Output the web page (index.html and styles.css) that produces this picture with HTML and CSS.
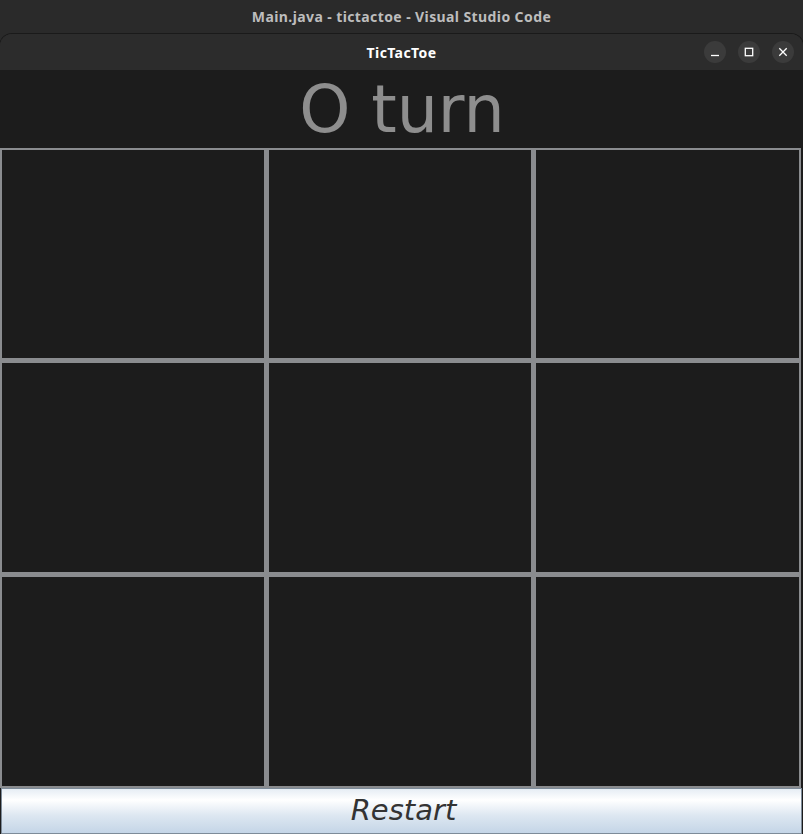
FILE: index.html
```html
<!DOCTYPE html>
<html>
<head>
<meta charset="utf-8">
<link rel="stylesheet" href="styles.css">
</head>
<body>
<div class="desk">
  <div class="vsbar">Main.java - tictactoe - Visual Studio Code</div>
  <div class="win">
    <div class="header">
      <div class="title">TicTacToe</div>
      <div class="ctrls">
        <span class="cbtn"><svg width="12" height="12" viewBox="0 0 12 12"><path d="M2 9.5h8" stroke="#fff" stroke-width="1.3"/></svg></span>
        <span class="cbtn"><svg width="12" height="12" viewBox="0 0 12 12"><rect x="2.3" y="2.3" width="7.4" height="7.4" fill="none" stroke="#fff" stroke-width="1.3"/></svg></span>
        <span class="cbtn"><svg width="12" height="12" viewBox="0 0 12 12"><path d="M2.3 2.3l7.4 7.4M9.7 2.3l-7.4 7.4" stroke="#fff" stroke-width="1.3"/></svg></span>
      </div>
    </div>
    <div class="body">
      <div class="status">O turn</div>
      <div class="grid">
        <div class="cell"></div><div class="cell"></div><div class="cell"></div>
        <div class="cell"></div><div class="cell"></div><div class="cell"></div>
        <div class="cell"></div><div class="cell"></div><div class="cell"></div>
      </div>
      <button class="restart">Restart</button>
    </div>
  </div>
</div>
</body>
</html>
```
FILE: styles.css
```css
html, body {
  margin: 0;
  padding: 0;
  background: #2a2a2a;
  overflow: hidden;
}
.desk {
  width: 803px;
  height: 834px;
  display: flex;
  flex-direction: column;
  background: #2a2a2a;
}
.vsbar {
  height: 34px;
  line-height: 34px;
  text-align: center;
  color: #bdbdbd;
  font-family: "Noto Sans", "DejaVu Sans", sans-serif;
  font-weight: bold;
  font-size: 14px;
  letter-spacing: 0.4px;
  flex: none;
}
.win {
  flex: 1;
  display: flex;
  flex-direction: column;
  border-radius: 12px 12px 0 0;
  background: #2c2c2c;
  box-shadow: 0 0 0 1px #1a1a1a;
  overflow: hidden;
}
.header {
  height: 36px;
  flex: none;
  display: flex;
  align-items: center;
  justify-content: center;
  background: #2c2c2c;
}
.title {
  color: #ffffff;
  font-family: "Noto Sans", "DejaVu Sans", sans-serif;
  font-weight: bold;
  font-size: 14px;
  letter-spacing: 0.4px;
}
.ctrls {
  position: absolute;
  right: 9px;
  top: 41px;
  display: flex;
  gap: 12px;
}
.cbtn {
  width: 22px;
  height: 22px;
  border-radius: 50%;
  background: #3b3b3b;
  display: flex;
  align-items: center;
  justify-content: center;
}
.body {
  flex: 1;
  display: flex;
  flex-direction: column;
  background: #1c1c1c;
}
.status {
  height: 78px;
  flex: none;
  text-align: center;
  color: #8e8e8e;
  font-family: "DejaVu Sans", sans-serif;
  font-size: 65px;
  line-height: 80px;
  padding-left: 1px;
  box-sizing: border-box;
}
.grid {
  height: 640px;
  width: 801px;
  flex: none;
  display: grid;
  gap: 1px;
  background: #8a8c8f;
  grid-template-columns: 266px 266px 267px;
  grid-template-rows: 212px 213px 213px;
}
.cell {
  border: 2px solid #8a8c8f;
  background: #1c1c1c;
}
.restart {
  flex: 1;
  width: 801px;
  margin: 0 0 0 1px;
  border: 1px solid #7d8b99;
  background: linear-gradient(#e6edf4 0%, #ffffff 25%, #dde7f1 60%, #c4d5e7 100%);
  font-family: "DejaVu Sans", sans-serif;
  font-style: italic;
  font-size: 29px;
  color: #333333;
  padding: 0 0 2px 4px;
}
```
